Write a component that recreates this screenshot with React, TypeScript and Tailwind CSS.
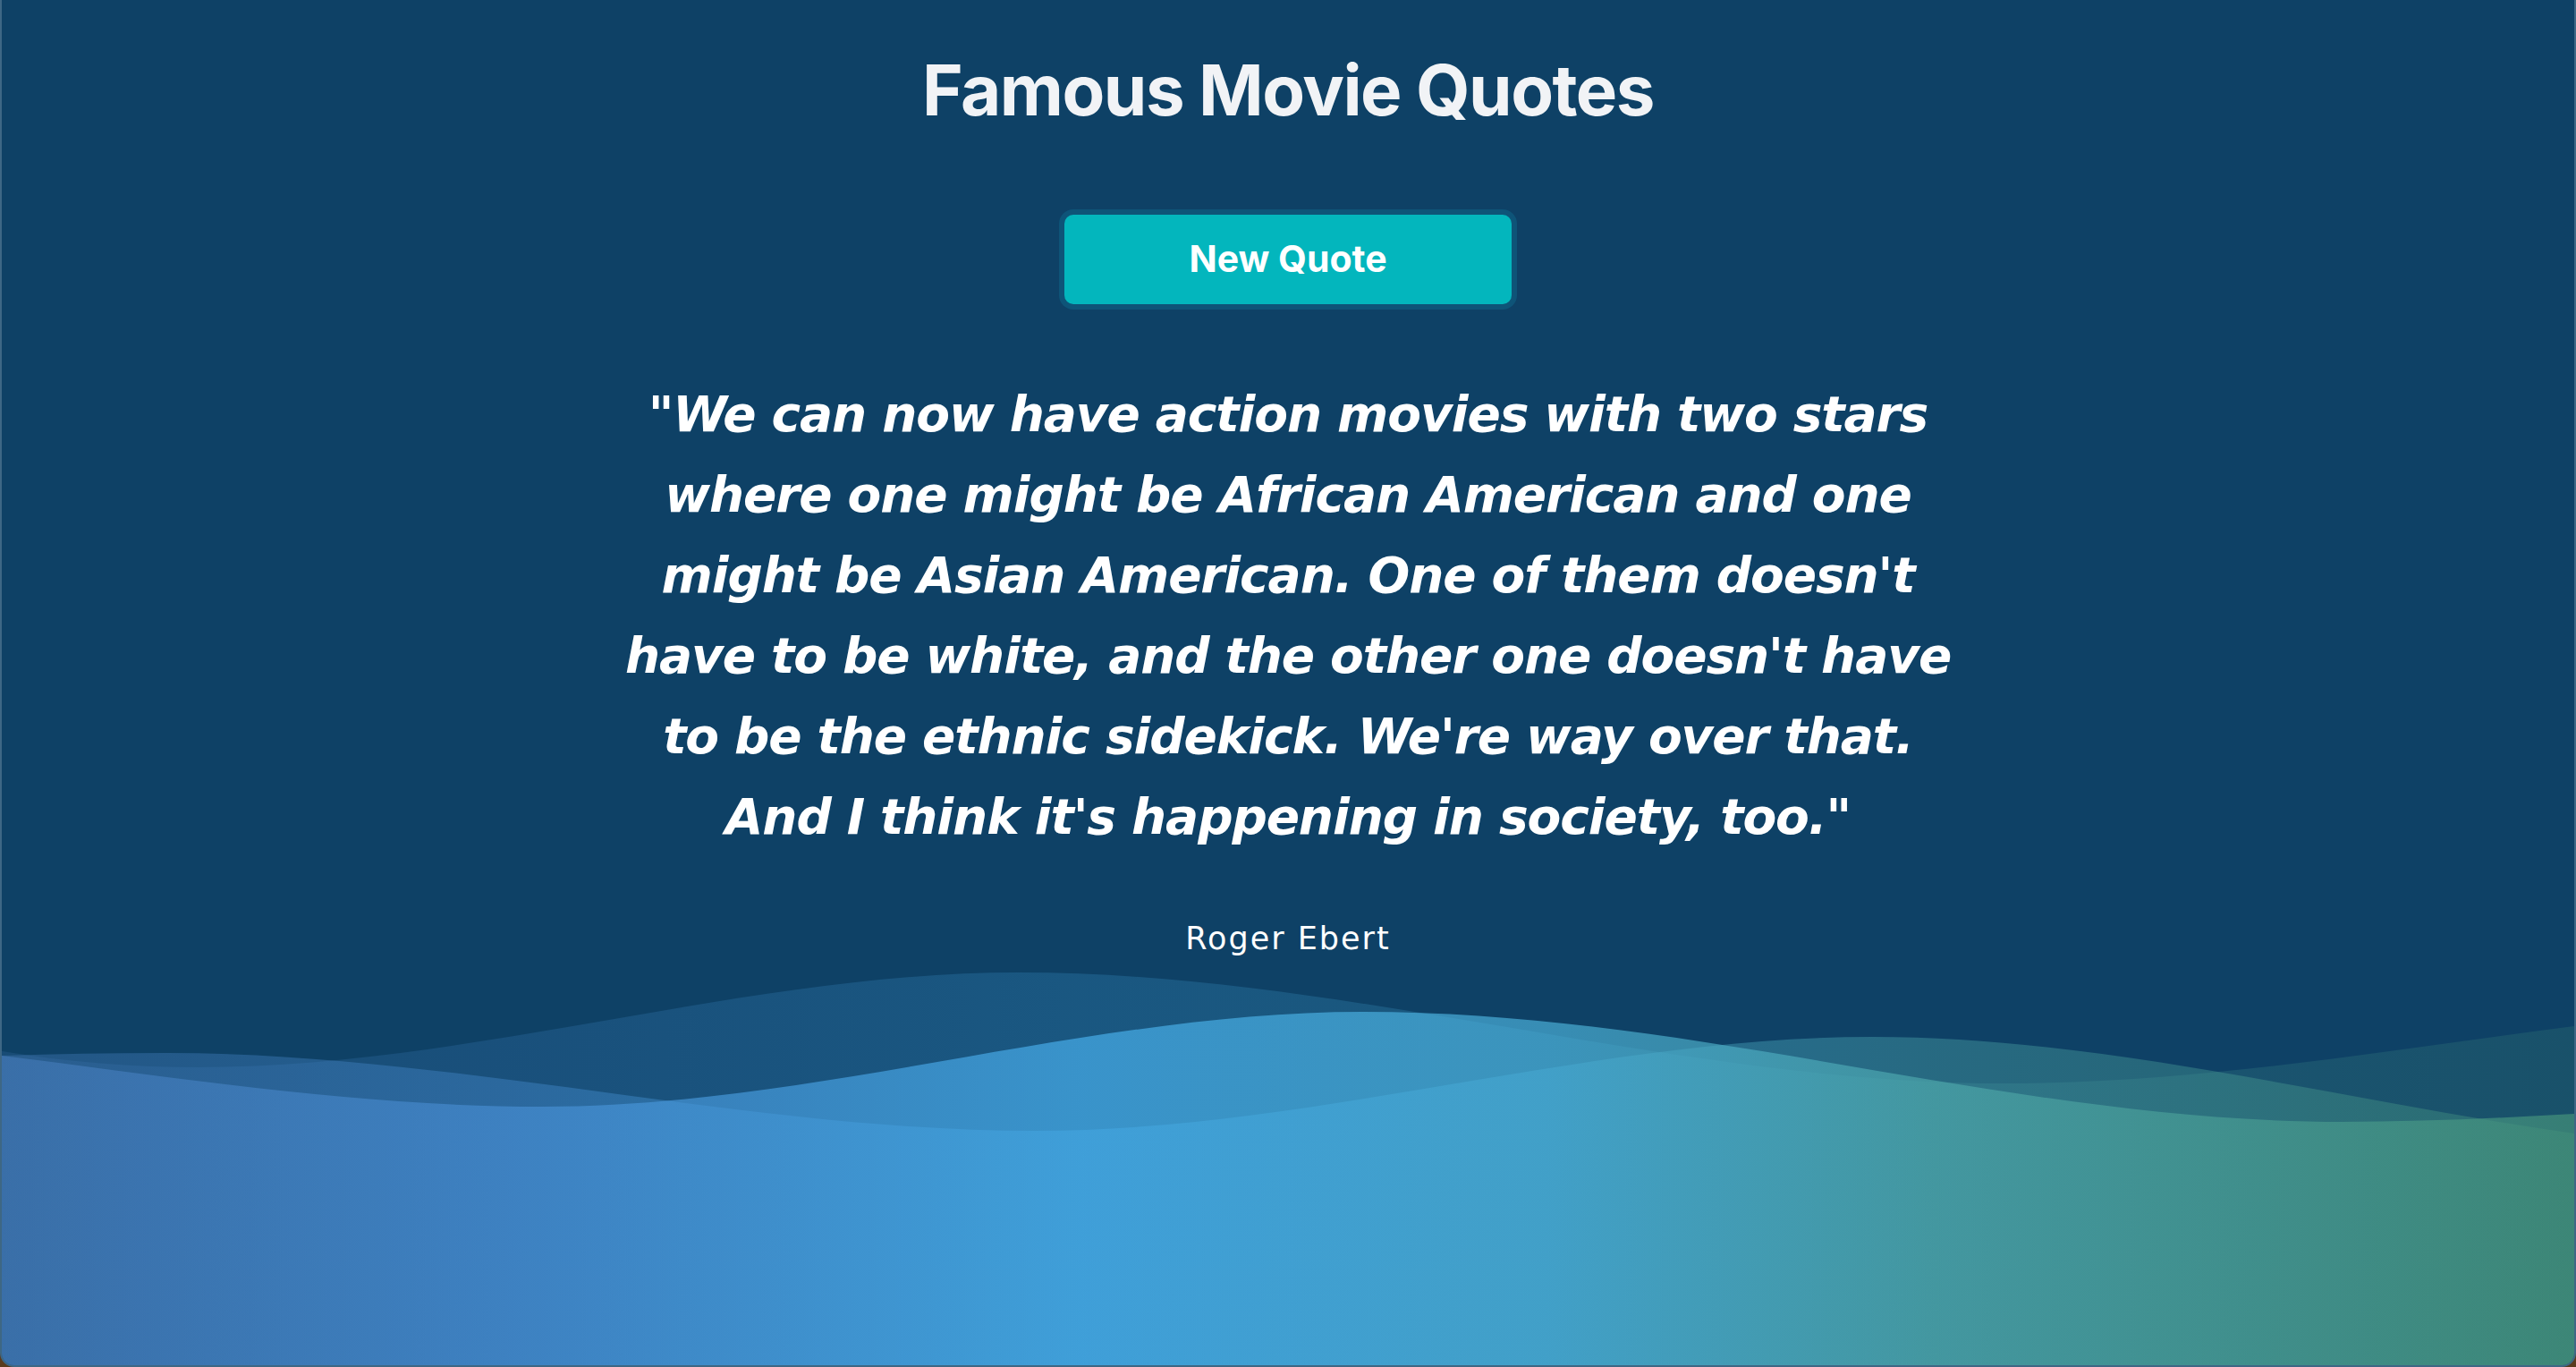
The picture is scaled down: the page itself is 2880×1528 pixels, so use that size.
import React from "react";

const QUOTE_LINES = [
  "\"We can now have action movies with two stars",
  "where one might be African American and one",
  "might be Asian American. One of them doesn't",
  "have to be white, and the other one doesn't have",
  "to be the ethnic sidekick. We're way over that.",
  "And I think it's happening in society, too.\"",
];

function Waves() {
  return (
    <svg
      className="mt-auto block h-[446px] w-full shrink-0"
      viewBox="0 0 2880 446"
      preserveAspectRatio="none"
      aria-hidden="true"
    >
      <defs>
        <linearGradient id="waveGrad" gradientUnits="userSpaceOnUse" x1="0" y1="0" x2="2880" y2="0">
          <stop offset="0" stopColor="#4277b4" />
          <stop offset="0.2" stopColor="#468dd2" />
          <stop offset="0.42" stopColor="#48b0ed" />
          <stop offset="0.6" stopColor="#4bb1da" />
          <stop offset="0.75" stopColor="#4da7ab" />
          <stop offset="1" stopColor="#45937a" />
        </linearGradient>
      </defs>
      <path
        d="M0,95 C73,107 147,113 220,113 C526,113 833,7 1139,7 C1506,7 1874,131 2241,131 C2454,131 2667,95 2880,67 V446 H0 Z"
        fill="url(#waveGrad)"
        opacity="0.2"
      />
      <path
        d="M0,100 C200,125 400,157 606,157 C912,157 1218,51 1524,51 C1900,51 2250,174 2620,174 C2707,174 2794,170 2880,165 V446 H0 Z"
        fill="url(#waveGrad)"
        opacity="0.68"
      />
      <path
        d="M0,100 C61,98 122,97 184,97 C508,97 833,184 1157,184 C1469,184 1782,79 2094,79 C2356,79 2618,150 2880,187 V446 H0 Z"
        fill="url(#waveGrad)"
        opacity="0.4"
      />
    </svg>
  );
}

export default function App() {
  return (
    <div className="h-screen w-full bg-[#5a3b1e]">
      <div className="flex h-full flex-col items-center overflow-hidden rounded-b-[16px] border-x-2 border-b-2 border-white/20 bg-[#0e4166]">
        <h1 className="mt-[62px] font-['Inter',sans-serif] text-[78px] font-bold leading-none tracking-[-1.5px] text-[#f1f3f6]">
          Famous Movie Quotes
        </h1>
        <button
          type="button"
          className="mt-[100px] flex h-[100px] w-[500px] shrink-0 items-center justify-center rounded-[10px] bg-[#03b6bd] font-['Inter',sans-serif] text-[41px] font-bold text-white ring-[6px] ring-[#0e5478]"
        >
          New Quote
        </button>
        <p className="mt-[78px] whitespace-nowrap text-center font-['DejaVu_Sans',sans-serif] text-[55px] font-bold italic leading-[90px] tracking-[-1.1px] text-white">
          {QUOTE_LINES.map((line, i) => (
            <React.Fragment key={i}>
              {line}
              {i < QUOTE_LINES.length - 1 && <br />}
            </React.Fragment>
          ))}
        </p>
        <p className="mt-[66px] font-['DejaVu_Sans',sans-serif] text-[35px] leading-[51px] tracking-[2px] text-white">
          Roger Ebert
        </p>
        <Waves />
      </div>
    </div>
  );
}
